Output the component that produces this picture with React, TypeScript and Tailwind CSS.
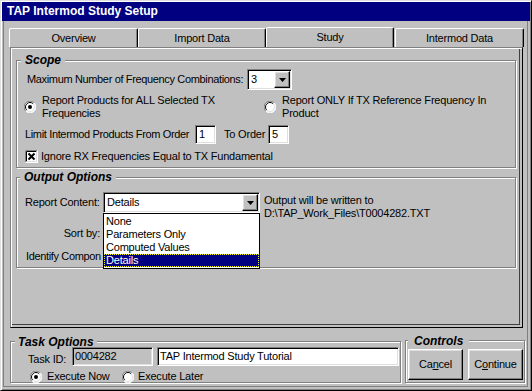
import type { ReactNode } from 'react';

const FONT = { fontFamily: '"Liberation Sans", Arial, sans-serif' };

const SUNKEN =
  'border border-t-[#808080] border-l-[#808080] border-r-white border-b-white shadow-[inset_1px_1px_0_#000,inset_-1px_-1px_0_#dfdfdf]';
const RAISED =
  'border border-t-white border-l-white border-r-black border-b-black shadow-[inset_-1px_-1px_0_#808080,inset_1px_1px_0_#dfdfdf]';
const ETCHED = 'border border-[#808080] shadow-[1px_1px_0_#fff,inset_1px_1px_0_#fff]';

function Radio({ checked }: { checked?: boolean }) {
  return (
    <svg width="12" height="12" viewBox="0 0 12 12" className="shrink-0">
      <circle cx="6" cy="6" r="5.5" fill="#fff" />
      <path d="M10.2 1.8A5.9 5.9 0 0 0 1.8 10.2" stroke="#808080" fill="none" />
      <path d="M9.2 2.8A4.5 4.5 0 0 0 2.8 9.2" stroke="#000" fill="none" />
      <path d="M1.8 10.2A5.9 5.9 0 0 0 10.2 1.8" stroke="#fff" fill="none" />
      <path d="M2.8 9.2A4.5 4.5 0 0 0 9.2 2.8" stroke="#dfdfdf" fill="none" />
      {checked && <circle cx="6" cy="6" r="2" fill="#000" />}
    </svg>
  );
}

function Check() {
  return (
    <svg width="13" height="13" viewBox="0 0 13 13" className="shrink-0">
      <rect width="13" height="13" fill="#fff" />
      <path d="M0.5 12.5V0.5H12.5" stroke="#808080" fill="none" />
      <path d="M1.5 11.5V1.5H11.5" stroke="#000" fill="none" />
      <path d="M0.5 12.5H12.5V0.5" stroke="#fff" fill="none" />
      <path d="M1.5 11.5H11.5V1.5" stroke="#dfdfdf" fill="none" />
      <path d="M3.5 3.5L9.5 9.5M9.5 3.5L3.5 9.5" stroke="#000" strokeWidth="2" />
    </svg>
  );
}

function Combo({ value, w }: { value: string; w: string }) {
  return (
    <div className={`${SUNKEN} ${w} h-[21px] p-[1px] bg-white flex items-center`}>
      <span className="flex-1 pl-[2px]">{value}</span>
      <div className={`${RAISED} w-[16px] h-[17px] bg-[#c0c0c0] flex items-center justify-center`}>
        <svg width="7" height="4" viewBox="0 0 7 4">
          <path d="M0 0H7L3.5 4Z" fill="#000" />
        </svg>
      </div>
    </div>
  );
}

function Legend({ children, cls }: { children: ReactNode; cls: string }) {
  return (
    <div className={`w-fit bg-[#c0c0c0] font-bold italic text-[12px] leading-[14px] tracking-normal ${cls}`}>{children}</div>
  );
}

const TABS: [string, string][] = [
  ['Overview', 'w-[129px]'],
  ['Import Data', 'w-[128px]'],
  ['Study', 'w-[128px]'],
  ['Intermod Data', 'w-[129px] ml-[1px]'],
];

export default function App() {
  return (
    <div
      className="w-[532px] h-[391px] flex flex-col p-[1px] bg-[#c0c0c0] text-black text-[11px] leading-[13px] tracking-[-0.2px] whitespace-nowrap border border-t-[#dfdfdf] border-l-[#dfdfdf] border-r-black border-b-black shadow-[inset_1px_1px_0_#fff,inset_-1px_-1px_0_#808080]"
      style={FONT}
    >
      <div className="h-[19px] shrink-0 bg-[#000080] text-white font-bold text-[12px] tracking-normal flex items-center pl-[5px]">
        TAP Intermod Study Setup
      </div>

      <div className="flex-1 flex flex-col ml-[1px] mr-[2px] mb-[2px] border-l border-r border-b border-[#808080]">
        {/* tabs */}
        <div className="flex items-end h-[20px] mt-[6px] ml-[5px]">
          {TABS.map(([name, w]) => (
            <div
              key={name}
              className={`${w} ${name === 'Study' ? 'h-[20px]' : 'h-[19px]'} border-t border-l border-r border-t-white border-l-white border-r-black rounded-t-[2px] shadow-[inset_-1px_0_0_#808080] flex items-center justify-center`}
            >
              {name}
            </div>
          ))}
        </div>

        {/* tab page */}
        <div className="ml-[6px] w-[513px] h-[281px] shrink-0 flex flex-col border border-t-[#808080] border-l-[#808080] border-r-black border-b-black shadow-[inset_1px_1px_0_#fff,inset_-2px_-2px_0_#c0c0c0,inset_-3px_-3px_0_#404040]">
          {/* Scope */}
          <div className={`mt-[12px] ml-[5px] w-[500px] h-[108px] flex flex-col ${ETCHED}`}>
            <Legend cls="-mt-[8px] ml-[4px] px-[4px]">Scope</Legend>
            <div className="flex items-center mt-[2px] ml-[10px] h-[21px]">
              <span className="w-[220px] tracking-[-0.35px]">Maximum Number of Frequency Combinations:</span>
              <Combo value="3" w="w-[45px]" />
            </div>
            <div className="flex items-center mt-[4px] ml-[7px]">
              <div className="w-[240px] flex items-center">
                <Radio checked />
                <span className="ml-[6px]">
                  Report Products for ALL Selected TX
                  <br />
                  Frequencies
                </span>
              </div>
              <Radio />
              <span className="ml-[6px]">
                Report ONLY If TX Reference Frequency In
                <br />
                Product
              </span>
            </div>
            <div className="flex items-center mt-[5px] ml-[8px] h-[19px]">
              <span className="w-[170px] tracking-[-0.35px]">Limit Intermod Products From Order</span>
              <div className={`${SUNKEN} w-[21px] h-[19px] bg-white pl-[3px] flex items-center`}>1</div>
              <span className="ml-[8px] w-[44px]">To Order</span>
              <div className={`${SUNKEN} w-[21px] h-[19px] bg-white pl-[3px] flex items-center`}>5</div>
            </div>
            <div className="flex items-center mt-[6px] ml-[8px] h-[13px]">
              <Check />
              <span className="ml-[3px]">Ignore RX Frequencies Equal to TX Fundamental</span>
            </div>
          </div>

          {/* Output Options */}
          <div className={`mt-[9px] ml-[5px] w-[500px] h-[91px] flex flex-col ${ETCHED}`}>
            <Legend cls="-mt-[8px] ml-[3px] px-[4px]">Output Options</Legend>
            <div className="flex items-start mt-[8px] ml-[8px]">
              <span className="w-[78px] h-[21px] flex items-center">Report Content:</span>
              <div className="relative">
                <Combo value="Details" w="w-[157px]" />
                <div className="absolute left-0 top-full z-10 w-[157px] bg-white border border-black pt-[1px] pb-[1px]">
                  {['None', 'Parameters Only', 'Computed Values'].map(o => (
                    <div key={o} className="h-[13px] pl-[2px]">{o}</div>
                  ))}
                  <div className="h-[13px] pl-[2px] bg-[#000080] text-white outline-1 outline-dotted outline-[#ffff00] -outline-offset-1">
                    Details
                  </div>
                </div>
              </div>
              <div className="ml-[4px] mt-[2px]">
                Output will be written to
                <br />
                D:\TAP_Work_Files\T0004282.TXT
              </div>
            </div>
            <div className="flex items-center mt-[3px] ml-[8px] h-[21px]">
              <span className="w-[75px] text-right">Sort by:</span>
            </div>
            <div className="flex items-center mt-[3px] ml-[9px] h-[21px]">
              <span className="tracking-[-0.35px]">Identify Compon</span>
            </div>
          </div>
        </div>

        {/* bottom */}
        <div className="flex items-start ml-[6px]">
          <div className={`mt-[13px] w-[391px] h-[42px] flex flex-col ${ETCHED}`}>
            <Legend cls="-mt-[7px] leading-[12px] ml-[4px] px-[3px]">Task Options</Legend>
            <div className="flex items-start -mt-[2px] ml-[17px] h-[19px]">
              <span className="w-[44px] mt-[6px]">Task ID:</span>
              <div className={`${SUNKEN} w-[81px] h-[19px] pl-[2px] flex items-center`}>0004282</div>
              <div className={`${SUNKEN} ml-[4px] w-[242px] h-[19px] bg-white pl-[2px] flex items-center`}>
                TAP Intermod Study Tutorial
              </div>
            </div>
            <div className="flex items-center mt-[4px] ml-[19px] h-[13px]">
              <div className="w-[92px] flex items-center">
                <Radio checked />
                <span className="ml-[5px]">Execute Now</span>
              </div>
              <Radio />
              <span className="ml-[4px]">Execute Later</span>
            </div>
          </div>

          <div className={`mt-[12px] ml-[4px] w-[120px] h-[43px] flex flex-col ${ETCHED}`}>
            <Legend cls="-mt-[7px] leading-[12px] ml-[2px] px-[6px]">Controls</Legend>
            <div className="flex mt-[1px] ml-[2px]">
              <div className={`${RAISED} w-[55px] h-[31px] flex items-center justify-center`}>
                <span>
                  Ca<u>n</u>cel
                </span>
              </div>
              <div className={`${RAISED} ml-[5px] w-[55px] h-[31px] flex items-center justify-center`}>
                <span>
                  C<u>o</u>ntinue
                </span>
              </div>
            </div>
          </div>
        </div>
      </div>
    </div>
  );
}
